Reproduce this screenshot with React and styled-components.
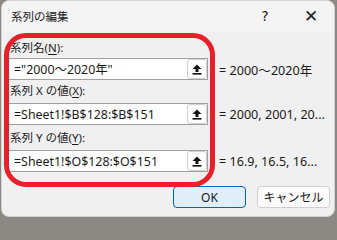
import React from "react";
import styled, { createGlobalStyle } from "styled-components";

const GlobalStyle = createGlobalStyle`
  html, body {
    margin: 0;
    padding: 0;
    background: #8c8883;
    width: 337px;
    height: 219px;
    overflow: hidden;
  }
  body {
    font-family: "Noto Sans", "Noto Sans CJK JP", sans-serif;
    color: #1a1a1a;
  }
`;

const Window = styled.div`
  position: relative;
  width: 334px;
  height: 217px;
  margin-left: 1px;
  background: #f0f0f0;
  border-radius: 8px;
  border: 1px solid #d4d4d4;
  box-sizing: border-box;
  overflow: hidden;
  display: flex;
  flex-direction: column;
`;

const TitleBar = styled.div`
  height: 30px;
  flex: none;
  display: flex;
  align-items: center;
  padding-left: 9px;
  background: #f4f4f4;
  font-size: 11.5px;
`;

const Title = styled.span`
  flex: 1;
  margin-top: -1px;
`;

const TitleButton = styled.span`
  width: 46px;
  text-align: center;
  font-size: ${(p) => p.size || 13}px;
  font-family: "DejaVu Sans", sans-serif;
  color: #222;
`;

const Body = styled.div`
  padding: 5px 0 0 6px;
  display: flex;
  flex-direction: column;
`;

const Label = styled.div`
  font-size: 11.5px;
  line-height: 16px;
  height: 16px;
  padding-left: 2px;
  margin-top: ${(p) => p.top || 0}px;
  margin-bottom: ${(p) => p.bottom || 2}px;
  white-space: pre;
`;

const Key = styled.span`
  text-decoration: underline;
  text-underline-offset: 2px;
`;

const Row = styled.div`
  display: flex;
  align-items: center;
`;

const InputBox = styled.div`
  width: 200px;
  height: 22px;
  box-sizing: border-box;
  background: #fff;
  border: 1px solid #a0a0a0;
  display: flex;
  align-items: center;
  padding-left: 5px;
  font-size: 12.4px;
`;

const InputText = styled.span`
  flex: 1;
  white-space: pre;
`;

const RefButton = styled.div`
  width: 20px;
  height: 20px;
  box-sizing: border-box;
  border: 1px solid #d0d0d0;
  border-radius: 3px;
  background: #fdfdfd;
  display: flex;
  align-items: center;
  justify-content: center;
`;

const Value = styled.span`
  margin-left: 11px;
  font-size: 12.6px;
  white-space: pre;
`;

const Footer = styled.div`
  display: flex;
  justify-content: flex-end;
  gap: 11px;
  padding-right: 4px;
  margin-top: 14px;
`;

const Button = styled.div`
  width: 73px;
  height: 22px;
  box-sizing: border-box;
  border-radius: 4px;
  border: 1px solid ${(p) => (p.primary ? "#0067c0" : "#d0d0d0")};
  background: ${(p) => (p.primary ? "#e1edf8" : "#fbfbfb")};
  display: flex;
  align-items: center;
  justify-content: center;
  font-size: 12px;
`;

const Highlight = styled.div`
  position: absolute;
  left: 2px;
  top: 32px;
  width: 211px;
  height: 154px;
  box-sizing: border-box;
  border: 5px solid #e8202a;
  border-radius: 22px;
  pointer-events: none;
`;

const ArrowUp = () => (
  <svg width="10" height="11" viewBox="0 0 10 11">
    <path d="M5 0.5 L9.5 5 L6.5 5 L6.5 8 L3.5 8 L3.5 5 L0.5 5 Z" fill="#111" />
    <rect x="0.5" y="9" width="9" height="1.6" fill="#111" />
  </svg>
);

const Field = ({ label, input, value, top, bottom }) => (
  <>
    <Label top={top} bottom={bottom}>{label}</Label>
    <Row>
      <InputBox>
        <InputText>{input}</InputText>
        <RefButton>
          <ArrowUp />
        </RefButton>
      </InputBox>
      <Value>{value}</Value>
    </Row>
  </>
);

export default function App() {
  return (
    <>
      <GlobalStyle />
      <Window>
        <TitleBar>
          <Title>系列の編集</Title>
          <TitleButton size={14}>?</TitleButton>
          <TitleButton size={17}>✕</TitleButton>
        </TitleBar>
        <Body>
          <Field
            top={4}
            label={<>系列名(<Key>N</Key>):</>}
            input={'="2000～2020年"'}
            value="= 2000～2020年"
          />
          <Field
            top={3}
            bottom={4}
            label={<>系列 X の値(<Key>X</Key>):</>}
            input="=Sheet1!$B$128:$B$151"
            value="= 2000, 2001, 20..."
          />
          <Field
            top={5}
            bottom={4}
            label={<>系列 Y の値(<Key>Y</Key>):</>}
            input="=Sheet1!$O$128:$O$151"
            value="= 16.9, 16.5, 16..."
          />
          <Footer>
            <Button primary>OK</Button>
            <Button>キャンセル</Button>
          </Footer>
        </Body>
        <Highlight />
      </Window>
    </>
  );
}
